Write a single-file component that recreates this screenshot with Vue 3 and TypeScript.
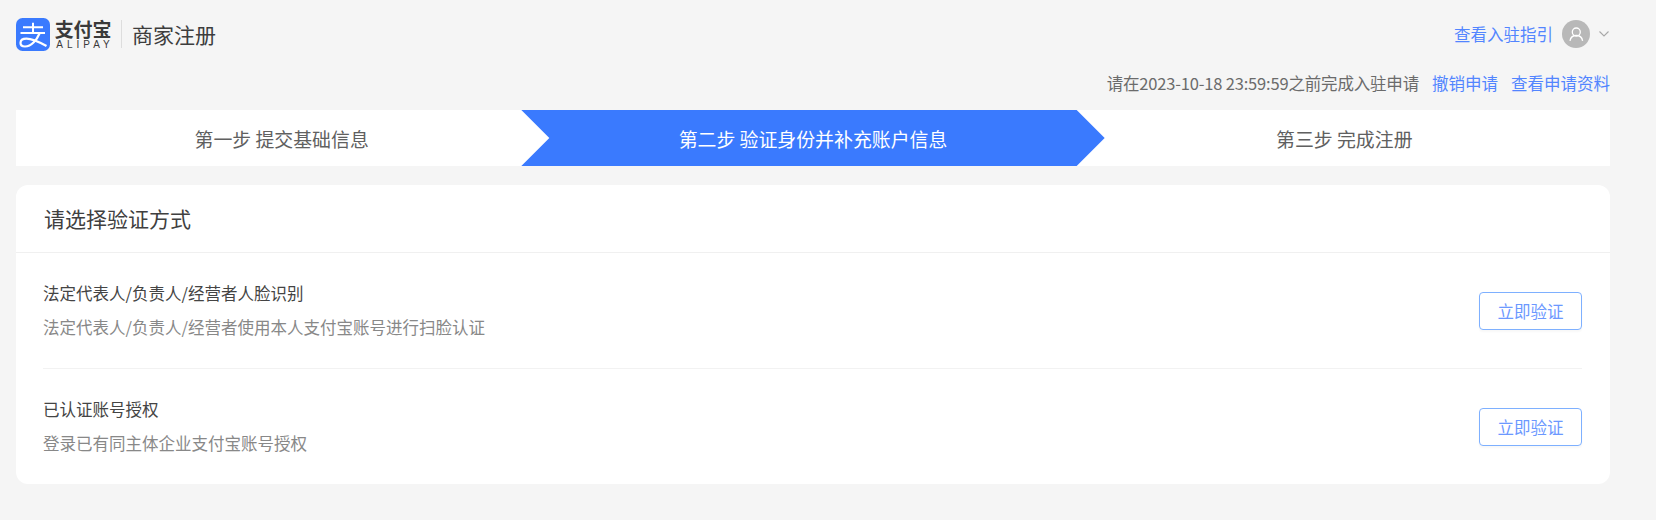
<template>
  <div class="page">
    <header class="top">
      <div class="brand">
        <svg class="brand-mark" viewBox="0 0 34 33" aria-hidden="true">
          <rect width="34" height="33" rx="6.500" fill="#3a7afe" />
          <path d="M7 9.200h20M17 4.800v10M4.500 15h24.500" fill="none" stroke="#fff" stroke-width="2" />
          <path d="M23.500 15.500C21 21.500 15.500 28.500 9 28.500 5.500 28.500 4.500 26.500 4.500 25 4.500 22 7.500 20.700 10.500 20.700 16 20.700 23 24 30.500 28" fill="none" stroke="#fff" stroke-width="2.200" />
        </svg>
        <div class="brand-words">
          <span class="brand-cn">支付宝</span>
          <span class="brand-en">ALIPAY</span>
        </div>
        <i class="brand-line"></i>
        <span class="brand-title">商家注册</span>
      </div>
      <div class="user">
        <a class="link">查看入驻指引</a>
        <span class="avatar">
          <svg viewBox="0 0 28 28" width="28" height="28" aria-hidden="true">
            <circle cx="14.300" cy="12" r="4" fill="none" stroke="#fff" stroke-width="1.300" />
            <path d="M8 20.800c.5-3.300 3-5.300 6.300-5.300s5.800 2 6.300 5.300" fill="none" stroke="#fff" stroke-width="1.300" />
          </svg>
        </span>
        <svg class="chevron" viewBox="0 0 12 8" aria-hidden="true">
          <path d="M1.500 1.500 6 6l4.500-4.500" fill="none" stroke="#a8a8a8" stroke-width="1.100" />
        </svg>
      </div>
    </header>

    <div class="notice">
      <span class="deadline">请在2023-10-18 23:59:59之前完成入驻申请</span>
      <a class="link">撤销申请</a>
      <a class="link">查看申请资料</a>
    </div>

    <nav class="steps">
      <div
        v-for="step in steps"
        :key="step.label"
        class="step"
        :class="{ active: step.active }"
      >
        {{ step.label }}
      </div>
    </nav>

    <section class="card">
      <h2 class="card-title">请选择验证方式</h2>
      <div class="card-body">
        <div v-for="item in methods" :key="item.title" class="method">
          <div class="method-text">
            <div class="method-title">{{ item.title }}</div>
            <div class="method-desc">{{ item.desc }}</div>
          </div>
          <button type="button" class="verify">立即验证</button>
        </div>
      </div>
    </section>
  </div>
</template>

<script setup lang="ts">
const steps = [
  { label: "第一步 提交基础信息", active: false },
  { label: "第二步 验证身份并补充账户信息", active: true },
  { label: "第三步 完成注册", active: false },
];

const methods = [
  {
    title: "法定代表人/负责人/经营者人脸识别",
    desc: "法定代表人/负责人/经营者使用本人支付宝账号进行扫脸认证",
  },
  {
    title: "已认证账号授权",
    desc: "登录已有同主体企业支付宝账号授权",
  },
];
</script>

<style>
html,
body {
  background: #f5f5f5;
}
</style>

<style scoped>
.page {
  box-sizing: border-box;
  height: 520px;
  padding: 0 46px 0 16px;
  background: #f5f5f5;
  font-family: "Noto Sans CJK SC", "Noto Sans", sans-serif;
  overflow: hidden;
}
.top {
  display: flex;
  align-items: center;
  justify-content: space-between;
  height: 68px;
}
.brand {
  display: flex;
  align-items: center;
}
.brand-mark {
  width: 34px;
  height: 33px;
  margin-right: 5px;
}
.brand-words {
  display: flex;
  flex-direction: column;
  align-items: center;
  width: 56px;
}
.brand-cn {
  font-size: 19px;
  line-height: 20px;
  font-weight: 700;
  letter-spacing: -0.2px;
  white-space: nowrap;
  color: #3a3a3a;
}
.brand-en {
  font-family: "Liberation Sans", sans-serif;
  font-size: 10px;
  line-height: 11px;
  letter-spacing: 4px;
  margin-right: -4px;
  color: #3a3a3a;
}
.brand-line {
  width: 1px;
  height: 28px;
  margin: 0 10px;
  background: #ddd;
}
.brand-title {
  font-size: 21px;
  line-height: 30px;
  color: #3d3d3d;
}
.user {
  display: flex;
  align-items: center;
  font-size: 16.500px;
}
.link {
  color: #5285ff;
  cursor: pointer;
}
.avatar {
  display: flex;
  align-items: center;
  justify-content: center;
  width: 28px;
  height: 28px;
  margin-left: 9px;
  border-radius: 50%;
  background: #b8b8b8;
}
.chevron {
  width: 12px;
  height: 8px;
  margin-left: 8px;
}
.notice {
  display: flex;
  justify-content: flex-end;
  align-items: center;
  gap: 13px;
  height: 30px;
  font-size: 16.500px;
  color: #6b6b6b;
}
.deadline {
  letter-spacing: -0.18px;
}
.steps {
  display: grid;
  grid-template-columns: repeat(3, 1fr);
  height: 56px;
  margin-top: 12px;
  background: #fff;
}
.step {
  display: flex;
  align-items: center;
  justify-content: center;
  font-size: 18.900px;
  color: #606060;
}
.step.active {
  margin: 0 -26px;
  background: #3a7afe;
  color: #fff;
  clip-path: polygon(0 0, calc(100% - 28px) 0, 100% 50%, calc(100% - 28px) 100%, 0 100%, 28px 50%);
}
.card {
  margin-top: 19px;
  background: #fff;
  border-radius: 12px;
}
.card-title {
  margin: 0;
  height: 67px;
  padding: 0 28px;
  border-bottom: 1px solid #f0f0f0;
  font-size: 21px;
  font-weight: 400;
  line-height: 67px;
  color: #404040;
}
.card-body {
  padding: 0 28px 0 27px;
}
.method {
  display: flex;
  align-items: center;
  justify-content: space-between;
  height: 115px;
}
.method + .method {
  border-top: 1px solid #f2f2f2;
}
.method-text {
  padding-bottom: 2px;
}
.method-title {
  font-size: 16.500px;
  line-height: 24px;
  color: #444;
}
.method-desc {
  margin-top: 10px;
  font-size: 16.500px;
  line-height: 24px;
  color: #888;
}
.verify {
  width: 103px;
  height: 38px;
  padding: 0;
  border: 1px solid #7eb0ff;
  border-radius: 4px;
  background: #fff;
  box-shadow: 0 2px 2px rgba(0, 0, 0, 0.03);
  font: inherit;
  font-size: 16.500px;
  color: #6c98ff;
  cursor: pointer;
}
</style>
